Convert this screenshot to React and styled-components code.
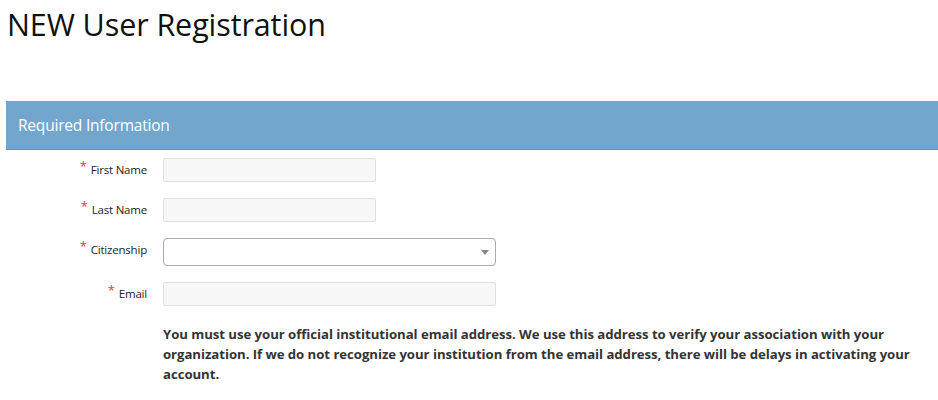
import React from 'react'
import styled, { createGlobalStyle } from 'styled-components'

const GlobalStyle = createGlobalStyle`
  body {
    margin: 0;
    background: #fff;
    font-family: "Open Sans", "Noto Sans", Arial, sans-serif;
    color: #333;
  }
`

const Page = styled.div`
  padding: 0 0 0 6px;
  width: 932px;
`

const Title = styled.h1`
  margin: 0;
  padding: 3px 0 0 1px;
  height: 101px;
  box-sizing: border-box;
  font-size: 30.5px;
  font-weight: 400;
  color: #111;
  letter-spacing: -0.1px;
`

const PanelHeader = styled.div`
  background: #72a6cd;
  border-bottom: 1px solid #5f93bb;
  height: 48px;
  display: flex;
  align-items: center;
  padding-left: 12px;
  color: #fff;
  font-size: 15.5px;
  letter-spacing: -0.2px;
`

const Form = styled.div`
  display: grid;
  grid-template-columns: 141px 1fr;
  column-gap: 16px;
  row-gap: 16px;
  padding-top: 8px;
  align-items: start;
`

const Label = styled.label`
  display: block;
  height: 24px;
  text-align: right;
  font-size: 11.5px;
  line-height: 24px;
  color: #222;
  letter-spacing: -0.2px;
`

const Star = styled.span`
  color: #e8392f;
  font-size: 13px;
  line-height: 0;
  margin-right: 4px;
  position: relative;
  top: -3px;
`

const Input = styled.div`
  width: ${p => p.$w}px;
  height: 24px;
  box-sizing: border-box;
  background: #f7f7f7;
  border: 1px solid #e0e0e0;
  border-radius: 2px;
`

const Select = styled.div`
  width: 333px;
  height: 28px;
  box-sizing: border-box;
  background: #fff;
  border: 1px solid #aaa;
  border-radius: 4px;
  display: flex;
  align-items: center;
  justify-content: flex-end;
  padding-right: 6px;
`

const Arrow = styled.span`
  width: 0;
  height: 0;
  border-left: 4px solid transparent;
  border-right: 4px solid transparent;
  border-top: 5px solid #888;
`

const Note = styled.p`
  grid-column: 2;
  margin: 0;
  padding-top: 2px;
  font-size: 13.2px;
  font-weight: 700;
  line-height: 20px;
  color: #333;
  letter-spacing: -0.05px;
  padding-right: 8px;
`

const Field = ({ label, children }) => (
  <>
    <Label><Star>*</Star>{label}</Label>
    {children}
  </>
)

const App = () => {
  return (
    <Page>
      <GlobalStyle />
      <Title>NEW User Registration</Title>
      <PanelHeader>Required Information</PanelHeader>
      <Form>
        <Field label="First Name"><Input $w={213} /></Field>
        <Field label="Last Name"><Input $w={213} /></Field>
        <Field label="Citizenship"><Select><Arrow /></Select></Field>
        <Field label="Email"><Input $w={333} /></Field>
        <Note>
          You must use your official institutional email address. We use this address to verify your association with your organization. If we do not recognize your institution from the email address, there will be delays in activating your account.
        </Note>
      </Form>
    </Page>
  )
}

export default App
